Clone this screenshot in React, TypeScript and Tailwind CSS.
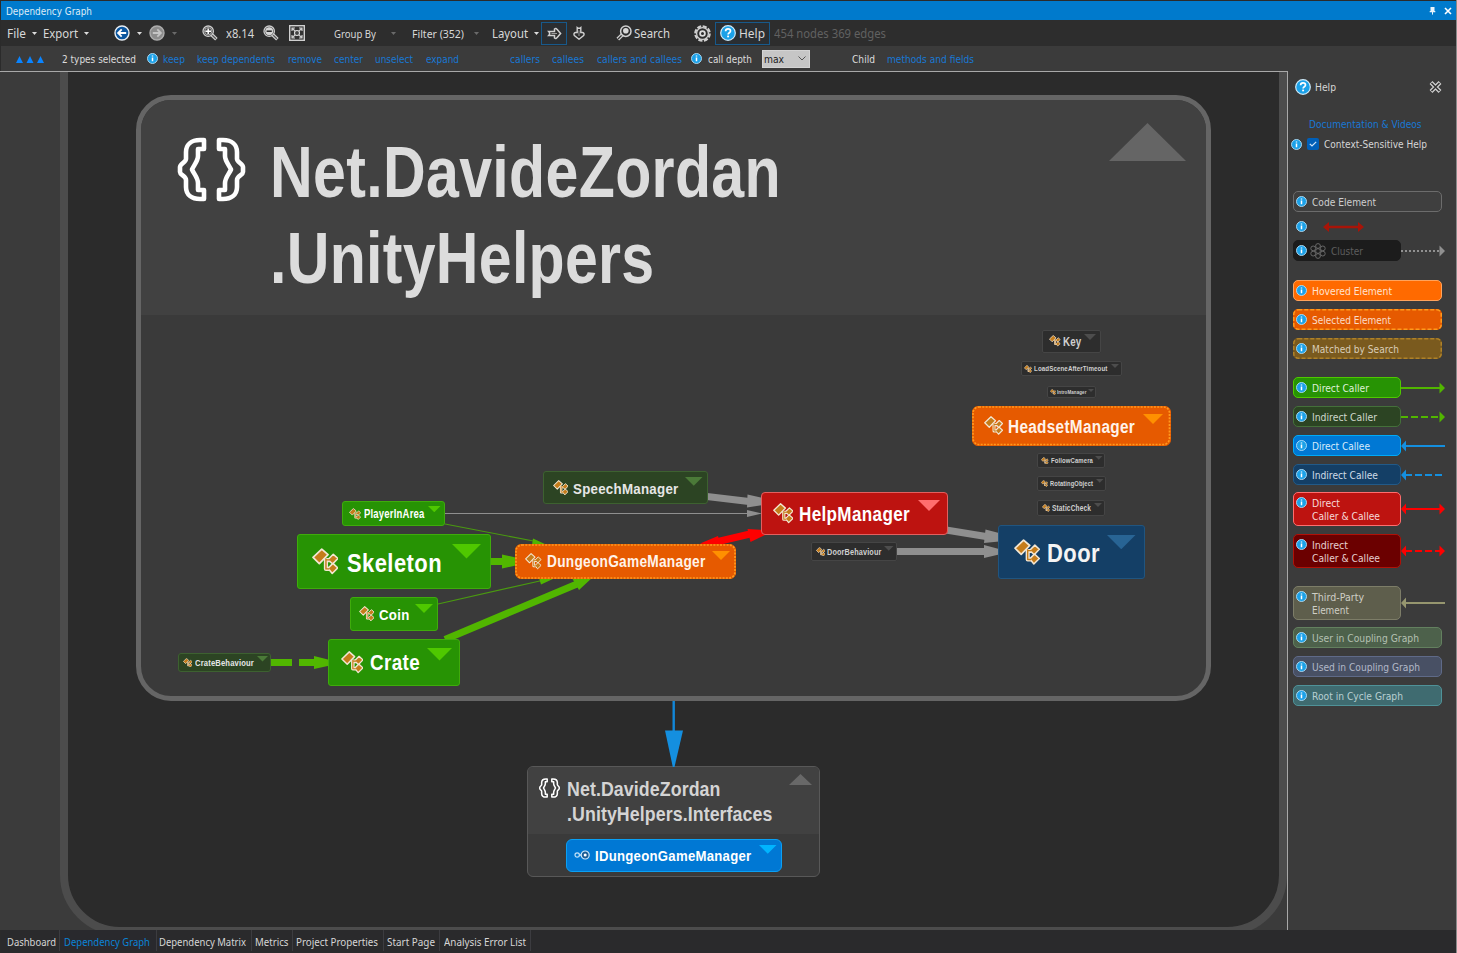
import { useLayoutEffect, useRef, type ReactNode } from "react";

/* Single-line text condensed or widened to a fixed width. */
function Fit({ w, children, className = "" }: { w: number; children: ReactNode; className?: string }) {
  const ref = useRef<HTMLSpanElement>(null);
  useLayoutEffect(() => {
    const el = ref.current;
    if (!el) return;
    el.style.transform = "none";
    const natural = el.getBoundingClientRect().width;
    if (natural > 0) el.style.transform = `scaleX(${w / natural})`;
  }, [w]);
  return (
    <span className={`block shrink-0 whitespace-nowrap ${className}`} style={{ width: w }}>
      <span ref={ref} className="inline-block origin-left whitespace-nowrap align-top">
        {children}
      </span>
    </span>
  );
}

function Info({ className = "" }: { className?: string }) {
  return (
    <svg className={`block size-[11px] shrink-0 ${className}`} viewBox="0 0 11 11">
      <circle cx="5.5" cy="5.5" r="5" fill="#1ba1e8" stroke="#b5e0f8" strokeWidth="0.9" />
      <path d="M5.5 4.6V8.3M5.5 2.4V3.6" stroke="#fff" strokeWidth="1.5" />
    </svg>
  );
}

function Question({ className = "" }: { className?: string }) {
  return (
    <svg className={`block size-4 shrink-0 ${className}`} viewBox="0 0 16 16">
      <circle cx="8" cy="8" r="7.3" fill="#1ba1e8" stroke="#cfeaf9" strokeWidth="1.2" />
      <path d="M5.6 6.3C5.6 4.7 6.6 3.9 8 3.9S10.5 4.8 10.5 6.1C10.5 7.7 8.1 7.7 8.1 9.4" fill="none" stroke="#fff" strokeWidth="1.7" />
      <path d="M8.1 10.6V12.3" stroke="#fff" strokeWidth="1.9" />
    </svg>
  );
}

function Caret({ className = "", dim = false }: { className?: string; dim?: boolean }) {
  return (
    <svg className={`block h-[3px] w-[5px] shrink-0 ${className}`} viewBox="0 0 5 3">
      <path d="M0 0H5L2.5 3Z" fill={dim ? "#6a6a6a" : "#dcdcdc"} />
    </svg>
  );
}

function NavCircle({ forward = false, className = "" }: { forward?: boolean; className?: string }) {
  return (
    <svg className={`block size-4 shrink-0 ${className}`} viewBox="0 0 16 16">
      <circle cx="8" cy="8" r="7" fill={forward ? "#8c8c8c" : "#0b569f"} stroke={forward ? "#adadad" : "#e8eef4"} strokeWidth="1.4" />
      <path
        d={forward ? "M3.8 8H11.6M8.3 4.4L11.9 8L8.3 11.6" : "M12.2 8H4.4M7.7 4.4L4.1 8L7.7 11.6"}
        fill="none"
        stroke={forward ? "#c4c4c4" : "#fff"}
        strokeWidth="1.8"
      />
    </svg>
  );
}

function Lens({ minus = false, className = "" }: { minus?: boolean; className?: string }) {
  return (
    <svg className={`block size-4 shrink-0 ${className}`} viewBox="0 0 16 16">
      <path d="M9.6 9.6L14.4 14.2" stroke="#d0d0d0" strokeWidth="3.6" />
      <path d="M10 10L13.9 13.7" stroke="#555" strokeWidth="1.2" />
      <circle cx="6.2" cy="6.2" r="5.2" fill="#303030" stroke="#cfcfcf" strokeWidth="1.3" />
      <circle cx="6.2" cy="6.2" r="3.7" fill={minus ? "#d6d6d6" : "#444"} stroke="#ddd" strokeWidth="0.7" />
      <path d={minus ? "M3.6 6.2H8.8" : "M3.4 6.2H9M6.2 3.4V9"} stroke={minus ? "#222" : "#fff"} strokeWidth="1.5" />
    </svg>
  );
}

function TitleBar() {
  return (
    <div className="mt-px flex h-[19px] items-center bg-[#007acc] pl-[5px] pr-[4px] font-['DejaVu_Sans',sans-serif] text-[10.500px] leading-[14px] text-[#dcebf7]">
      <Fit w={86}>Dependency Graph</Fit>
      <svg className="ml-auto block h-[9px] w-[7px]" viewBox="0 0 7 9">
        <path d="M1.5 1H5.5V5H6.3V6.2H0.7V5H1.5Z" fill="#e8f3fb" />
        <path d="M3.5 6V8.6" stroke="#e8f3fb" />
      </svg>
      <svg className="ml-[8px] block size-[8px]" viewBox="0 0 8 8">
        <path d="M1 1L7 7M7 1L1 7" stroke="#fff" strokeWidth="1.6" />
      </svg>
    </div>
  );
}

function Toolbar() {
  return (
    <div className="flex h-[26px] items-center bg-[#2d2d2d] pl-[6px] text-[12px] leading-[16px] text-[#d8d8d8]">
      <Fit w={19} className="mt-px">File</Fit>
      <Caret className="ml-[6px]" />
      <Fit w={35} className="ml-[6px] mt-px">Export</Fit>
      <Caret className="ml-[6px]" />
      <NavCircle className="ml-[24.500px]" />
      <Caret className="ml-[7px]" />
      <NavCircle forward className="ml-[7px]" />
      <Caret dim className="ml-[7px]" />
      <Lens className="ml-[25px]" />
      <Fit w={28} className="ml-[8.500px] mt-px">x8.14</Fit>
      <Lens minus className="ml-[9px]" />
      <svg className="ml-[10px] block size-4 shrink-0" viewBox="0 0 16 16">
        <rect x="0.7" y="0.7" width="14.6" height="14.6" fill="#333" stroke="#d0d0d0" strokeWidth="1.4" />
        <path d="M3 6V3H6M10 3H13V6M13 10V13H10M6 13H3V10M3 3L6 6M13 3L10 6M13 13L10 10M3 13L6 10" fill="none" stroke="#ccc" strokeWidth="1.2" />
        <circle cx="8" cy="8" r="2.5" fill="#444" stroke="#ddd" strokeWidth="1.1" />
      </svg>
      <Fit w={42} className="ml-[29px] mt-px text-[11px]">Group By</Fit>
      <Caret dim className="ml-[15px]" />
      <Fit w={52} className="ml-[16px] mt-px text-[11px]">Filter (352)</Fit>
      <Caret dim className="ml-[10px]" />
      <Fit w={36} className="ml-[13px] mt-px">Layout</Fit>
      <Caret className="ml-[6px]" />
      <div className="ml-[2px] flex h-[23px] w-[26px] shrink-0 items-center justify-center border border-[#17598b] bg-[#2a2e32]">
        <svg className="block h-[13px] w-[15px]" viewBox="0 0 15 13">
          <path d="M1.700 4.500H7.500V2Q9 0.800 10.200 2.600L13.600 6.500L10.200 10.400Q9 12.200 7.500 11V8.500H1.700Q3.600 6.500 1.700 4.500Z" fill="#2d2d2d" stroke="#d0d0d0" strokeWidth="1.500" />
          <path d="M4.500 6.500H10" stroke="#9a9a9a" />
        </svg>
      </div>
      <svg className="ml-[6px] block h-[14px] w-[12px] shrink-0" viewBox="0 0 12 14">
        <path d="M4.200 1.500Q6 3 7.800 1.500V6.500H9.400Q11.900 7.200 10.600 9.600L6 13.200L1.400 9.600Q0.100 7.200 2.600 6.500H4.200Z" fill="#2d2d2d" stroke="#d0d0d0" strokeWidth="1.400" />
        <path d="M6 4.500V10" stroke="#9a9a9a" />
      </svg>
      <svg className="ml-[31px] block size-4 shrink-0" viewBox="0 0 16 16">
        <path d="M6.5 9.5L1.8 14.2" stroke="#d0d0d0" strokeWidth="3.8" />
        <path d="M6.5 9.5L2 14" stroke="#333" strokeWidth="1.3" />
        <circle cx="9.8" cy="6.2" r="5.2" fill="#2d2d2d" stroke="#d0d0d0" strokeWidth="1.5" />
        <circle cx="9.8" cy="5.8" r="2.8" fill="#d8d8d8" />
      </svg>
      <Fit w={36} className="ml-[2px] mt-px">Search</Fit>
      <svg className="ml-[24px] block size-[17px] shrink-0" viewBox="0 0 17 17">
        <circle cx="8.5" cy="8.5" r="7.200" fill="none" stroke="#d0d0d0" strokeWidth="2.2" strokeDasharray="4.150 1.500" />
        <circle cx="8.5" cy="8.5" r="5.900" fill="#2d2d2d" stroke="#d0d0d0" strokeWidth="1.300" />
        <circle cx="8.5" cy="8.5" r="2.4" fill="none" stroke="#dcdcdc" strokeWidth="1.8" />
      </svg>
      <div className="ml-[4px] flex h-[23px] w-[55px] shrink-0 items-center border border-[#17598b] bg-[#2a2e32] pl-[4px]">
        <Question />
        <Fit w={26} className="ml-[3px] mt-px">Help</Fit>
      </div>
      <Fit w={112} className="ml-[4px] mt-px text-[#616161]">454 nodes 369 edges</Fit>
    </div>
  );
}

function SelectionBar() {
  return (
    <div className="flex h-[25px] items-center bg-[#3b3b3b] pl-[15px] font-['DejaVu_Sans',sans-serif] text-[10.500px] leading-[14px] text-[#1878d4]">
      <svg className="block h-[8px] w-[28px]" viewBox="0 0 28 8">
        <path d="M0 8L3.5 1L7 8ZM10.5 8L14 1L17.500 8ZM21 8L24.500 1L28 8Z" fill="#0a84ff" />
      </svg>
      <Fit w={74} className="ml-[18px] text-[#dcdcdc]">2 types selected</Fit>
      <Info className="ml-[10.500px]" />
      <Fit w={22} className="ml-[5px]">keep</Fit>
      <Fit w={78} className="ml-[12.500px]">keep dependents</Fit>
      <Fit w={34} className="ml-[13px]">remove</Fit>
      <Fit w={29} className="ml-[12px]">center</Fit>
      <Fit w={38} className="ml-[12px]">unselect</Fit>
      <Fit w={33} className="ml-[13px]">expand</Fit>
      <Fit w={30} className="ml-[51px]">callers</Fit>
      <Fit w={32} className="ml-[12px]">callees</Fit>
      <Fit w={85} className="ml-[13px]">callers and callees</Fit>
      <Info className="ml-[9px]" />
      <Fit w={44} className="ml-[6px] text-[#dcdcdc]">call depth</Fit>
      <div className="ml-[10px] flex h-[18px] w-[48px] shrink-0 items-center border border-[#d4d4d4] bg-[#c6c6c6] pl-[1px] text-[#1c1c1c]">
        <Fit w={20}>max</Fit>
        <svg className="ml-[14px] block h-[5px] w-[8px]" viewBox="0 0 8 5">
          <path d="M0.500 0.500L4 4L7.500 0.500" fill="none" stroke="#555" />
        </svg>
      </div>
      <Fit w={23} className="ml-[42px] text-[#dcdcdc]">Child</Fit>
      <Fit w={87} className="ml-[11.500px]">methods and fields</Fit>
    </div>
  );
}

function ClassIcon({ size }: { size: number }) {
  return (
    <svg className="block shrink-0" style={{ width: size, height: size }} viewBox="0 0 76 76">
      <g strokeLinejoin="round">
        <path d="M3 27L28 3L46 19L21 45Z" fill="#c57c1a" stroke="#f3e6d2" strokeWidth="5" />
        <path d="M40 30V60H52M40 35H56" fill="none" stroke="#f3e6d2" strokeWidth="12" />
        <path d="M46 33L61 18L74 30L59 46ZM46 58L60 44L74 57L58 73Z" fill="#c57c1a" stroke="#f3e6d2" strokeWidth="4.500" />
        <path d="M40 30V60H50M40 34H52" fill="none" stroke="#c57c1a" strokeWidth="4" />
      </g>
    </svg>
  );
}

function InterfaceIcon() {
  return (
    <svg className="block h-[10px] w-4 shrink-0" viewBox="0 0 16 10">
      <circle cx="3.2" cy="5" r="2.2" fill="none" stroke="#bfe0f7" strokeWidth="1.2" />
      <path d="M5.300 6L7 4.500" stroke="#bfe0f7" strokeWidth="1.4" />
      <circle cx="11.2" cy="5" r="4" fill="#1a5c96" stroke="#cfe8fa" strokeWidth="1.2" />
      <circle cx="11.2" cy="5" r="1.500" fill="#fff" />
    </svg>
  );
}

function Braces({ className, thickness }: { className: string; thickness: number }) {
  const d =
    "M26 3H22C13 3 8 8 8 15V22C8 25 2 27 2 30V35C2 38 8 39 8 43V50C8 58 14 62 22 62H26V53H20V46C20 41 16 37 14 32.500C16 28 20 24 20 19V12H26Z";
  return (
    <svg className={`block shrink-0 overflow-visible ${className}`} viewBox="0 0 67 65">
      <g fill="none" stroke="#fff" strokeWidth={thickness} strokeLinejoin="round">
        <path d={d} />
        <path d={d} transform="translate(67 0) scale(-1 1)" />
      </g>
    </svg>
  );
}

type Kind = "plain" | "direct" | "indirect" | "selected" | "both" | "callee" | "iface";
type NodeSpec = {
  label: string;
  kind: Kind;
  box: [number, number, number, number];
  icon: [number, number];
  text: [number, number, number];
  tri: [number, number, number];
};

const looks: Record<Kind, { box: string; tri: string }> = {
  plain: { box: "bg-[#2d2d2d] border-[#454545] text-[#d0d0d0] rounded-[2px]", tri: "#4d4d4d" },
  direct: { box: "bg-[#279304] border-[#3fab0c] text-white rounded-[3px]", tri: "#4fc800" },
  indirect: { box: "bg-[#2c4423] border-[#3d6130] text-[#e6e6e6] rounded-[3px]", tri: "#4b7a38" },
  selected: { box: "bg-[#e65a00] border-[#e65a00] text-[#fff3ea] rounded-[6px]", tri: "#ff9000" },
  both: { box: "bg-[#bd1310] border-[#e2605f] text-white rounded-[4px]", tri: "#ff6e6e" },
  callee: { box: "bg-[#143f66] border-[#205580] text-[#f4f4f4] rounded-[3px]", tri: "#286494" },
  iface: { box: "bg-[#0078d4] border-[#0aa0f4] text-white rounded-[6px]", tri: "#00b4ff" },
};

/* box: left, top, right, bottom; icon: left, size; text: left, right, font size; tri: left, top, width */
const nodes: NodeSpec[] = [
  { label: "PlayerInArea", kind: "direct", box: [342, 501, 445, 526], icon: [348.500, 12], text: [364, 424.500, 12], tri: [428, 506, 12.500] },
  { label: "Skeleton", kind: "direct", box: [296.500, 534, 490.500, 589], icon: [311.500, 26.500], text: [347, 442, 26.500], tri: [452, 544, 29] },
  { label: "Coin", kind: "direct", box: [349.500, 597, 438, 631], icon: [358.500, 15.500], text: [379, 409.500, 15.500], tri: [414.500, 604, 18] },
  { label: "Crate", kind: "direct", box: [328, 639, 459.500, 686], icon: [340.500, 22.500], text: [370, 420, 22.500], tri: [427, 648, 25] },
  { label: "CrateBehaviour", kind: "indirect", box: [178, 652.500, 271, 672], icon: [182.500, 9.500], text: [195, 254, 9.500], tri: [257, 656, 11] },
  { label: "SpeechManager", kind: "indirect", box: [543, 471, 708, 504], icon: [552.500, 15.500], text: [573, 678.500, 15.500], tri: [685, 477, 17.500] },
  { label: "DungeonGameManager", kind: "selected", box: [515, 544, 736, 579], icon: [525, 16.500], text: [546.500, 705, 16], tri: [711.500, 550.500, 18] },
  { label: "HelpManager", kind: "both", box: [761, 492, 947.500, 534.500], icon: [772.500, 20.500], text: [799, 910, 20.500], tri: [918, 500, 22] },
  { label: "DoorBehaviour", kind: "plain", box: [811, 542, 897, 561], icon: [815.500, 9.500], text: [827, 881.500, 9.500], tri: [884, 546, 9.500] },
  { label: "Door", kind: "callee", box: [998, 525, 1145, 578.500], icon: [1013.500, 26], text: [1046.500, 1099.500, 26], tri: [1107, 535, 28.500] },
  { label: "Key", kind: "plain", box: [1042, 329.500, 1101, 352.500], icon: [1049, 11.500], text: [1062.500, 1081, 12], tri: [1084, 334, 12] },
  { label: "LoadSceneAfterTimeout", kind: "plain", box: [1021, 361, 1122, 376], icon: [1024, 8], text: [1034, 1107.500, 7.500], tri: [1111, 364, 8] },
  { label: "IntroManager", kind: "plain", box: [1046.500, 386, 1096, 398], icon: [1050, 6], text: [1056.500, 1086, 6], tri: [1088, 388.500, 6] },
  { label: "HeadsetManager", kind: "selected", box: [972, 406, 1170.500, 445.500], icon: [984, 19], text: [1007.500, 1134.500, 18], tri: [1143, 414, 20] },
  { label: "FollowCamera", kind: "plain", box: [1037, 453, 1105, 468], icon: [1041, 7.500], text: [1050.500, 1092.500, 7.500], tri: [1095, 456, 7.500] },
  { label: "RotatingObject", kind: "plain", box: [1037, 476, 1105.500, 491], icon: [1041, 7], text: [1049.500, 1092.500, 7.500], tri: [1096, 479, 7.500] },
  { label: "StaticCheck", kind: "plain", box: [1037, 500, 1105, 516], icon: [1042, 8], text: [1051.500, 1090.500, 8.500], tri: [1094, 503, 8] },
  { label: "IDungeonGameManager", kind: "iface", box: [565.500, 838.500, 782, 872], icon: [574, 16], text: [595, 751.500, 15.500], tri: [759, 845, 17.500] },
];

const CANVAS_TOP = 72;

function GraphNode({ n }: { n: NodeSpec }) {
  const [l, t, r, b] = n.box;
  const size = n.text[2];
  return (
    <div
      className={`absolute flex items-center border font-bold ${looks[n.kind].box}`}
      style={{ left: l, top: t - CANVAS_TOP, width: r - l, height: b - t, paddingLeft: n.icon[0] - l - 1 }}
    >
      {n.kind === "selected" && (
        <svg className="absolute -left-px -top-px block overflow-visible" style={{ width: r - l, height: b - t }}>
          <rect x="1" y="1" width={r - l - 2} height={b - t - 2} rx="6" fill="none" stroke="#ff9a1c" strokeWidth="1.700" strokeDasharray="2 1.300" />
        </svg>
      )}
      {n.kind === "iface" ? <InterfaceIcon /> : <ClassIcon size={n.icon[1]} />}
      <div
        className="font-['Liberation_Sans',sans-serif] tracking-[0.02em]"
        style={{
          marginLeft: n.text[0] - n.icon[0] - n.icon[1],
          marginTop: size * 0.1,
          fontSize: size,
          lineHeight: `${size}px`,
        }}
      >
        <Fit w={n.text[1] - n.text[0]}>{n.label}</Fit>
      </div>
      <svg
        className="absolute block"
        style={{ left: n.tri[0] - l - 1, top: n.tri[1] - t - 1, width: n.tri[2], height: n.tri[2] / 2 }}
        viewBox="0 0 20 10"
      >
        <path d="M0 0H20L10 10Z" fill={looks[n.kind].tri} />
      </svg>
    </div>
  );
}

function Edges() {
  return (
    <svg className="absolute left-0 top-0 block h-[858px] w-[1287px]" viewBox="0 72 1287 858">
      <g stroke="#8f8f8f" fill="none" strokeWidth="7">
        <path d="M707 496.500L749 501.500M946 530L986 536.500M896 551.500H986" />
        <path d="M445 513.500H748" strokeWidth="1" />
      </g>
      <path d="M747.500 494.500L763 498V505L747 507.500ZM747 510L762 513.500L747 517ZM985.500 529.500L999 533V541.500L984 543ZM984 545L999 549V554.500L984 558Z" fill="#8f8f8f" />
      <g stroke="#51b600" fill="none" strokeWidth="7">
        <path d="M490 561.500H504M445 639.500L577 584M271 662.500H292M299 662.500H316" />
        <path d="M445 524L536 541.500M438 604L542 580.500" stroke="#4a9a10" strokeWidth="1.200" />
      </g>
      <path d="M502 554.500L518 558V565L502 568.500ZM533 538.500L547 545H532ZM539 578H555L541 584.500ZM572.500 579L593 577L579 590ZM314 656L330 660V665.500L314 669Z" fill="#51b600" />
      <path d="M716 542L750 534" stroke="#fe0000" strokeWidth="7" />
      <path d="M700 543.500L718 536L721 547ZM747.500 529L766 530V534.500L750.500 542Z" fill="#fe0000" />
      <path d="M673.700 701V732" stroke="#1287d8" strokeWidth="2.400" />
      <path d="M665 730.500H683L674.500 767H672.800Z" fill="#148fdf" />
    </svg>
  );
}

function GraphCanvas() {
  return (
    <div className="relative h-full w-[1287px] shrink-0 overflow-hidden bg-[#3b3b3b]">
      <div className="absolute -top-[120px] left-[60px] h-[983px] w-[1227px] rounded-[60px] border-8 border-[#4c4c4c] bg-[#2b2b2b]" />

      <div className="absolute left-[136px] top-[23px] h-[606px] w-[1075px] overflow-hidden rounded-[35px] border-[5px] border-[#656565] bg-[#3a3a3a] font-['Liberation_Sans',sans-serif] font-bold text-[#dcdcdc]">
        <div className="flex h-[215px] bg-[#414141] pl-[37px] pt-[37px]">
          <Braces className="h-[65px] w-[67px]" thickness={4.600} />
          <div className="-mt-[7px] ml-[25px] text-[72px] leading-[85.500px] tracking-[0.005em]">
            <Fit w={511}>Net.DavideZordan</Fit>
            <Fit w={384.5}>.UnityHelpers</Fit>
          </div>
          <svg className="ml-auto mr-[20px] mt-[-14px] block h-[38px] w-[77px]" viewBox="0 0 77 38">
            <path d="M0 38L38.500 0L77 38Z" fill="#656565" />
          </svg>
        </div>
      </div>

      <div className="absolute left-[527px] top-[694px] h-[111px] w-[293px] overflow-hidden rounded-[6px] border border-[#585858] bg-[#3a3a3a] font-['Liberation_Sans',sans-serif] font-bold text-[#d4d4d4]">
        <div className="flex h-[67px] bg-[#414141] pl-[11px] pt-[11px]">
          <Braces className="h-[20px] w-[21px]" thickness={5} />
          <div className="-mt-[2.500px] ml-[7px] text-[21px] leading-[25.500px] tracking-[0.005em]">
            <Fit w={153.5}>Net.DavideZordan</Fit>
            <Fit w={205.5}>.UnityHelpers.Interfaces</Fit>
          </div>
          <svg className="ml-auto mr-[7px] mt-[-4px] block h-[11px] w-[23px]" viewBox="0 0 23 11">
            <path d="M0 11L11.500 0L23 11Z" fill="#686868" />
          </svg>
        </div>
      </div>

      <Edges />
      {nodes.map((n) => (
        <GraphNode key={n.label} n={n} />
      ))}
    </div>
  );
}

type ArrowSpec = { color: string; dash?: string; start?: boolean; end?: boolean };

function Arrow({ color, dash, start, end }: ArrowSpec) {
  return (
    <svg className="block h-[12px] w-[44px] shrink-0" viewBox="0 0 44 12">
      <path d={`M${start ? 4 : 0} 6H${end ? 40 : 44}`} stroke={color} strokeWidth="2" strokeDasharray={dash} />
      {start && <path d="M0 6L5 0.500V11.500Z" fill={color} />}
      {end && <path d="M44 6L38.500 0.500V11.500Z" fill={color} />}
    </svg>
  );
}

type LegendSpec = { lines: [string, number][]; look: string; mt: string; arrow?: ArrowSpec; dashed?: string; cluster?: boolean };

const legendTop: LegendSpec = { lines: [["Code Element", 64]], look: "border-[#6c6c6c] bg-[#3f3f3f] text-[#cfcfcf]", mt: "mt-[40px]" };

const legend: LegendSpec[] = [
  { lines: [["Cluster", 32]], look: "border-[#1c1c1c] bg-[#1c1c1c] text-[#5e5e5e]", mt: "mt-[8px]", arrow: { color: "#909090", dash: "2 2", end: true }, cluster: true },
  { lines: [["Hovered Element", 80]], look: "border-[#ffa35c] bg-[#ff6a00] text-[#ffe3cf]", mt: "mt-[19px]" },
  { lines: [["Selected Element", 79]], look: "border-transparent bg-[#e65a00] text-[#fbdcc8]", mt: "mt-[8px]", dashed: "#ff9a1c" },
  { lines: [["Matched by Search", 87]], look: "border-transparent bg-[#7a5a1e] text-[#d9cdb8]", mt: "mt-[8px]", dashed: "#b08228" },
  { lines: [["Direct Caller", 57]], look: "border-[#4fc800] bg-[#279304] text-[#dff0d8]", mt: "mt-[18px]", arrow: { color: "#51b600", end: true } },
  { lines: [["Indirect Caller", 65]], look: "border-[#44703a] bg-[#2c4423] text-[#cfd8cc]", mt: "mt-[8px]", arrow: { color: "#51b600", dash: "7 3", end: true } },
  { lines: [["Direct Callee", 58]], look: "border-[#00aaf8] bg-[#0078d4] text-[#d6eafa]", mt: "mt-[8px]", arrow: { color: "#148fdf", start: true } },
  { lines: [["Indirect Callee", 66]], look: "border-[#225a88] bg-[#143f66] text-[#cfdbe6]", mt: "mt-[8px]", arrow: { color: "#148fdf", dash: "7 3", start: true } },
  { lines: [["Direct", 28], ["Caller & Callee", 68]], look: "border-[#ff6e6e] bg-[#bd1310] text-[#f6d9d8]", mt: "mt-[7px]", arrow: { color: "#fe0000", start: true, end: true } },
  { lines: [["Indirect", 36], ["Caller & Callee", 68]], look: "border-[#b01208] bg-[#6b0000] text-[#e6cfcf]", mt: "mt-[8px]", arrow: { color: "#fe0000", dash: "7 3", start: true, end: true } },
  { lines: [["Third-Party", 52], ["Element", 37]], look: "border-[#7d7d68] bg-[#5e5e4c] text-[#cfcfc6]", mt: "mt-[18px]", arrow: { color: "#96966f", start: true } },
  { lines: [["User in Coupling Graph", 107]], look: "border-[#63805f] bg-[#4d614b] text-[#b4c0b2]", mt: "mt-[7px]" },
  { lines: [["Used in Coupling Graph", 108]], look: "border-[#5f6a88] bg-[#485064] text-[#b2b8c8]", mt: "mt-[8px]" },
  { lines: [["Root in Cycle Graph", 91]], look: "border-[#4f9298] bg-[#3f6b70] text-[#b8cfd2]", mt: "mt-[8px]" },
];

function ClusterIcon() {
  return (
    <svg className="mr-[5px] block size-4 shrink-0" viewBox="0 0 16 16">
      <g fill="none" stroke="#686868">
        <circle cx="8" cy="8" r="2.400" />
        <circle cx="8" cy="3" r="2.400" />
        <circle cx="8" cy="13" r="2.400" />
        <circle cx="3.200" cy="5.400" r="2.400" />
        <circle cx="12.800" cy="5.400" r="2.400" />
        <circle cx="3.200" cy="10.600" r="2.400" />
        <circle cx="12.800" cy="10.600" r="2.400" />
      </g>
    </svg>
  );
}

function LegendRow({ s }: { s: LegendSpec }) {
  const tall = s.lines.length > 1;
  return (
    <div className={`flex items-center ${s.mt}`}>
      <div className={`relative flex shrink-0 rounded-[5px] border-[1.500px] pl-[2.500px] ${s.arrow ? "w-[108px]" : "w-[149px]"} ${s.look} ${tall ? "h-[34px] items-start pt-[4px]" : "h-[21px] items-center"}`}>
        {s.dashed && (
          <svg className="absolute -left-px -top-px block h-[21px] w-[149px]">
            <rect x="0.750" y="0.750" width="147.500" height="19.500" rx="4.500" fill="none" stroke={s.dashed} strokeWidth="1.500" strokeDasharray="4 2" />
          </svg>
        )}
        <Info className={tall ? "mr-[4.500px]" : s.cluster ? "mr-[3px]" : "mr-[4.500px]"} />
        {s.cluster && <ClusterIcon />}
        <div className={`leading-[13px] ${tall ? "" : "mt-px"}`}>
          {s.lines.map(([t, tw]) => (
            <Fit key={t} w={tw}>{t}</Fit>
          ))}
        </div>
      </div>
      {s.arrow && <Arrow {...s.arrow} />}
    </div>
  );
}

function HelpPanel() {
  return (
    <div className="flex-1 bg-[#3b3b3b] pl-[4.500px] pt-[8px] font-['DejaVu_Sans',sans-serif] text-[10.500px] leading-[14px] text-[#d6d6d6]">
      <div className="flex h-[16px] items-center pl-[2px]">
        <Question />
        <Fit w={21} className="ml-[4px]">Help</Fit>
        <svg className="ml-auto mr-[14px] block h-[12px] w-[13px]" viewBox="0 0 13 12">
          <path d="M2 1.500L11 10.500M11 1.500L2 10.500" stroke="#d0d0d0" strokeWidth="4" />
          <path d="M2.500 2L10.500 10M10.500 2L2.500 10" stroke="#333" strokeWidth="1.600" />
        </svg>
      </div>
      <div className="mt-[22px] pl-[16px] text-[#1878d4]">
        <Fit w={112.5}>Documentation &amp; Videos</Fit>
      </div>
      <div className="-ml-[2px] mt-[6px] flex h-[14px] items-center">
        <Info />
        <div className="ml-[5.500px] flex size-[12px] items-center justify-center rounded-[2px] bg-[#005fb8]">
          <svg className="block h-[6px] w-[8px]" viewBox="0 0 8 6">
            <path d="M0.800 2.800L3 5L7.200 0.800" fill="none" stroke="#cfe4f7" strokeWidth="1.200" />
          </svg>
        </div>
        <Fit w={103} className="ml-[5px]">Context-Sensitive Help</Fit>
      </div>
      <LegendRow s={legendTop} />
      <div className="mt-[8px] flex h-[12px] items-center pl-[3.500px]">
        <Info />
        <svg className="ml-[16px] mt-[2px] block h-[10px] w-[41px]" viewBox="0 0 41 10">
          <path d="M4 5H37" stroke="#a81408" strokeWidth="2.600" />
          <path d="M0 5L6 0V10ZM41 5L35 0V10Z" fill="#a81408" />
        </svg>
      </div>
      {legend.map((s, i) => (
        <LegendRow key={i} s={s} />
      ))}
    </div>
  );
}

const tabs: [string, number, string][] = [
  ["Dashboard", 49, "w-[58px] pl-[6px]"],
  ["Dependency Graph", 86, "w-[96px] pl-[4px]"],
  ["Dependency Matrix", 87, "w-[94px] pl-[1.500px]"],
  ["Metrics", 33.5, "w-[40px] pl-[2.500px]"],
  ["Project Properties", 82, "w-[90px] pl-[3px]"],
  ["Start Page", 48, "w-[55px] pl-[3px]"],
  ["Analysis Error List", 82, "w-[90px] pl-[3.500px]"],
];

function BottomTabs() {
  return (
    <div className="flex h-[23px] bg-[#2a2a2c] text-[11px] leading-[14px] text-[#d6d6d6]">
      {tabs.map(([t, w, cls], i) => (
        <div key={t} className={`box-content flex h-[21px] shrink-0 items-center border-r border-[#3c3c40] ${i === 1 ? "bg-[#29292d] text-[#0a84d8]" : ""}`}>
          <div className={`pt-[3px] ${cls}`}>
            <Fit w={w}>{t}</Fit>
          </div>
        </div>
      ))}
    </div>
  );
}

export default function App() {
  return (
    <div className="flex h-[953px] w-[1457px] overflow-hidden bg-[#2b2b2b] font-['Noto_Sans',sans-serif]">
      <div className="flex w-[1456px] flex-col border-l border-[#2b2b2b]">
        <TitleBar />
        <Toolbar />
        <SelectionBar />
        <div className="-ml-px flex h-[859px]">
          <div className="h-full w-[1288px] shrink-0 border-r border-t border-[#a8a8a8]">
            <GraphCanvas />
          </div>
          <HelpPanel />
        </div>
        <BottomTabs />
      </div>
      <div className="w-px bg-[#8a8a8a]" />
    </div>
  );
}
